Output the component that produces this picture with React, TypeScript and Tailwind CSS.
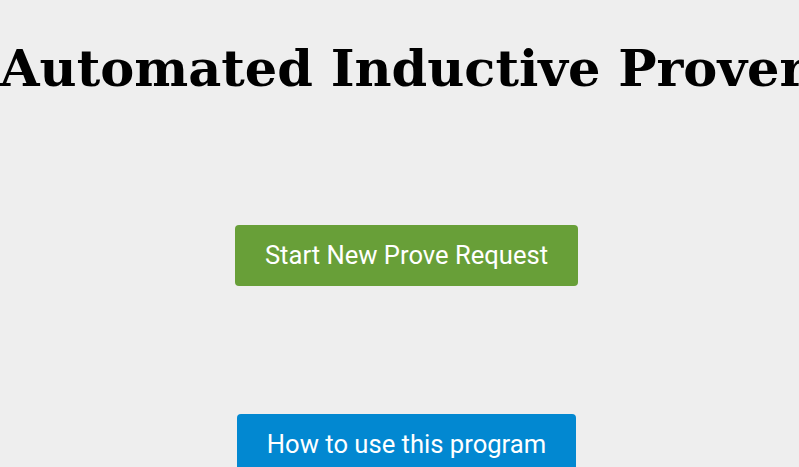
export default function App() {
  return (
    <div className="min-h-screen bg-[#eeeeee] overflow-hidden">
      <h1 className="whitespace-nowrap text-center font-['DejaVu_Serif',serif] text-[51px] font-bold leading-none text-black pt-[43px]">
        Automated Inductive Prover
      </h1>
      <div className="mt-[131px] pl-[14px] flex flex-col items-center gap-[128px] font-['Roboto',sans-serif]">
        <button className="rounded bg-[#689f38] px-[30px] py-[15px] text-[25.6px] leading-[31px] text-white">
          Start New Prove Request
        </button>
        <button className="rounded bg-[#0288d1] px-[30px] py-[15px] text-[25.6px] leading-[31px] text-white">
          How to use this program
        </button>
      </div>
    </div>
  )
}
